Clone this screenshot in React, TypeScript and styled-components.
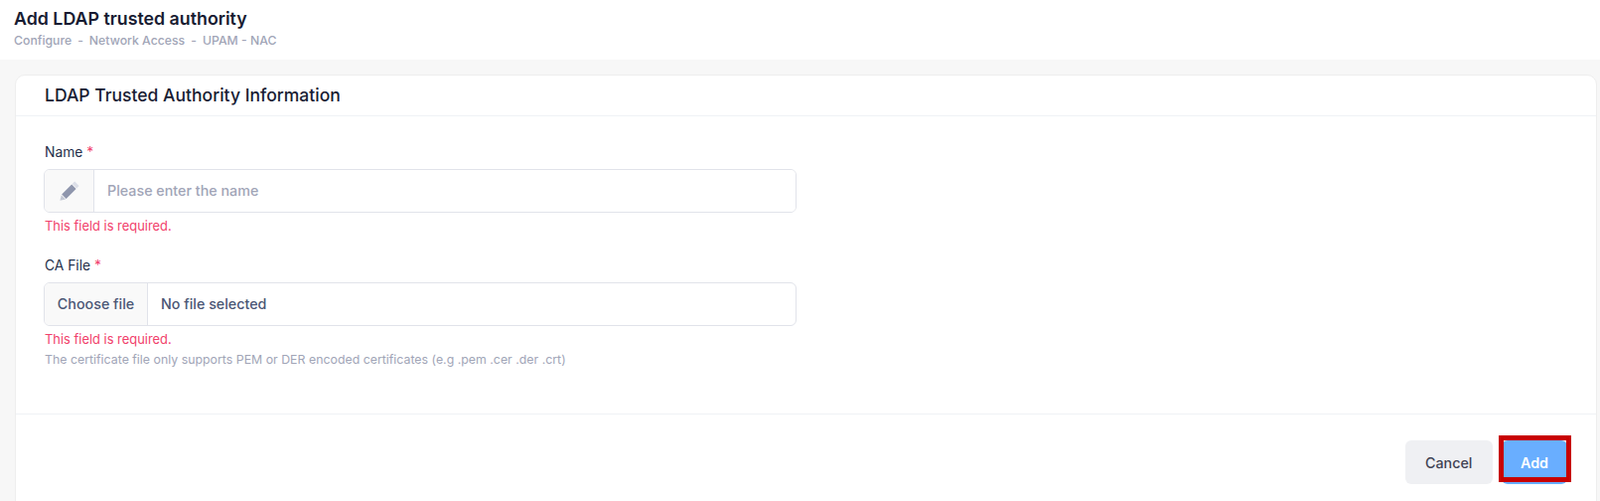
import styled, { createGlobalStyle } from "styled-components";

const GlobalStyle = createGlobalStyle`
  html, body {
    margin: 0;
    height: 504px;
    overflow: hidden;
    background: #f7f7f7;
    font-family: Inter, "Liberation Sans", sans-serif;
    font-size: 13px;
    color: #181c32;
  }
  * { box-sizing: border-box; }
`;

const Toolbar = styled.header`
  height: 60px;
  background: #fff;
  padding: 9px 14px 0;
`;

const PageTitle = styled.h1`
  margin: 0;
  font-size: 17.8px;
  line-height: 20px;
  font-weight: 600;
  color: #181c32;
`;

const Breadcrumb = styled.div`
  display: flex;
  gap: 6px;
  margin-top: 4px;
  font-size: 12.25px;
  line-height: 16px;
  font-weight: 500;
  color: #a1a5b7;
`;

const Content = styled.main`
  padding: 15px 3px 0 15px;
`;

const Card = styled.section`
  background: #fff;
  border: 1px solid #eeeeee;
  border-radius: 10px;
  height: 460px;
`;

const CardHeader = styled.div`
  height: 41px;
  padding: 0 29px 2px;
  display: flex;
  align-items: center;
  border-bottom: 1px solid #eff2f5;
`;

const CardTitle = styled.h2`
  margin: 0;
  font-size: 17.55px;
  font-weight: 500;
  color: #181c32;
`;

const CardBody = styled.div`
  height: 300px;
  padding: 28px 28px 0;
  border-bottom: 1px solid #eff2f5;
`;

const Field = styled.div`
  width: 758px;
  margin-bottom: 24px;
`;

const Label = styled.label`
  display: block;
  padding-left: 1px;
  font-size: 13.8px;
  line-height: 16px;
  font-weight: 400;
  color: #252f4a;
  margin-bottom: 9px;
`;

const Required = styled.span`
  color: #f1416c;
`;

const InputGroup = styled.div`
  display: flex;
  height: 44px;
  border: 1px solid #e1e3ea;
  border-radius: 6px;
  overflow: hidden;
  background: #fff;
`;

const Addon = styled.span`
  width: 50px;
  flex: none;
  display: flex;
  align-items: center;
  justify-content: center;
  background: #f9f9f9;
  border-right: 1px solid #e1e3ea;
`;

const TextInput = styled.input`
  flex: 1;
  border: 0;
  outline: 0;
  padding: 0 13px 2px;
  font: inherit;
  font-size: 14.3px;
  font-weight: 500;
  color: #4b5675;
  &::placeholder {
    color: #a1a5b7;
  }
`;

const ChooseFile = styled.span`
  flex: none;
  width: 104px;
  padding-bottom: 2px;
  display: flex;
  align-items: center;
  justify-content: center;
  background: #f9f9f9;
  border-right: 1px solid #e1e3ea;
  font-size: 14.3px;
  font-weight: 500;
  color: #4b5675;
`;

const FileName = styled.span`
  display: flex;
  align-items: center;
  padding: 0 13px 2px;
  font-size: 14.3px;
  font-weight: 500;
  color: #4b5675;
`;

const ErrorText = styled.div`
  margin-top: 6px;
  padding-left: 1px;
  font-size: 12.9px;
  line-height: 15px;
  color: #f1416c;
`;

const HintText = styled.div`
  margin-top: 5px;
  padding-left: 1px;
  font-size: 12.35px;
  line-height: 15px;
  color: #a1a5b7;
`;

const CardFooter = styled.div`
  display: flex;
  justify-content: flex-end;
  gap: 9px;
  padding: 26px 29px 0 0;
`;

const Button = styled.button<{ $primary?: boolean }>`
  position: relative;
  height: 44px;
  border: 0;
  border-radius: 6px;
  padding: 0 ${(p) => (p.$primary ? "19px" : "20.5px")};
  font: inherit;
  font-size: 14.3px;
  font-weight: ${(p) => (p.$primary ? 600 : 500)};
  color: ${(p) => (p.$primary ? "#fff" : "#3f4254")};
  background: ${(p) => (p.$primary ? "#69aeff" : "#eff0f3")};
`;

const Highlight = styled.span`
  position: absolute;
  left: -3px;
  right: -4px;
  top: -5px;
  height: 47px;
  border: 5px solid #c80000;
  pointer-events: none;
`;

function PencilIcon() {
  return (
    <svg width="20" height="20" viewBox="0 0 20 20" aria-hidden="true">
      <path d="M15.2 0.6 L19.6 5 L17.2 7.4 L12.8 3 Z" fill="#dcdfe8" />
      <path d="M12.2 3.6 L16.6 8 L6.6 18 L2.2 13.6 Z" fill="#8f96ad" />
      <path d="M1.8 14.2 L6 18.4 L0.4 19.8 Z" fill="#c4c8d4" />
    </svg>
  );
}

export default function App() {
  return (
    <>
      <GlobalStyle />
      <Toolbar>
        <PageTitle>Add LDAP trusted authority</PageTitle>
        <Breadcrumb>
          <span>Configure</span>
          <span>-</span>
          <span>Network Access</span>
          <span>-</span>
          <span>UPAM - NAC</span>
        </Breadcrumb>
      </Toolbar>
      <Content>
        <Card>
          <CardHeader>
            <CardTitle>LDAP Trusted Authority Information</CardTitle>
          </CardHeader>
          <CardBody>
            <Field>
              <Label>
                Name <Required>*</Required>
              </Label>
              <InputGroup>
                <Addon>
                  <PencilIcon />
                </Addon>
                <TextInput placeholder="Please enter the name" />
              </InputGroup>
              <ErrorText>This field is required.</ErrorText>
            </Field>
            <Field>
              <Label>
                CA File <Required>*</Required>
              </Label>
              <InputGroup>
                <ChooseFile>Choose file</ChooseFile>
                <FileName>No file selected</FileName>
              </InputGroup>
              <ErrorText>This field is required.</ErrorText>
              <HintText>
                The certificate file only supports PEM or DER encoded
                certificates (e.g .pem .cer .der .crt)
              </HintText>
            </Field>
          </CardBody>
          <CardFooter>
            <Button>Cancel</Button>
            <Button $primary>
              Add
              <Highlight />
            </Button>
          </CardFooter>
        </Card>
      </Content>
    </>
  );
}
